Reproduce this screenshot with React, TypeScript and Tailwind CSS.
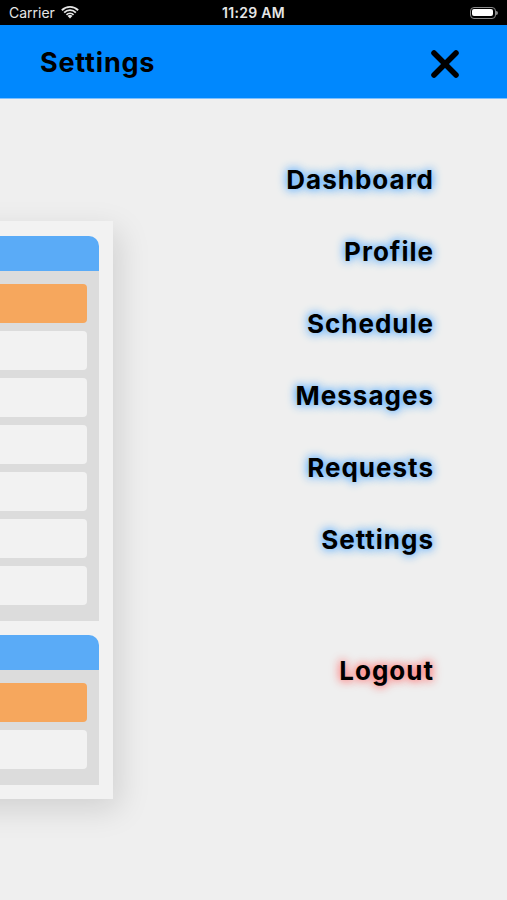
import { X } from "lucide-react";

const menu = ["Dashboard", "Profile", "Schedule", "Messages", "Requests", "Settings"];

function StatusBar() {
  return (
    <div className="h-[25px] bg-black text-[#e6e6e6] flex items-center justify-between px-[9px] text-[14px] font-['Inter',sans-serif]">
      <div className="flex items-center gap-[6px] w-[120px]">
        <span>Carrier</span>
        <svg width="18" height="13" viewBox="0 0 18 13" fill="#e6e6e6">
          <path d="M9 12.5 6.6 10a3.4 3.4 0 0 1 4.8 0z" />
          <path d="M4.8 8.2a6 6 0 0 1 8.4 0l-1.3 1.3a4.2 4.2 0 0 0-5.8 0z" />
          <path d="M2.5 5.9a9.3 9.3 0 0 1 13 0l-1.3 1.3a7.5 7.5 0 0 0-10.4 0z" />
          <path d="M.2 3.6a12.6 12.6 0 0 1 17.6 0l-1.3 1.3a10.8 10.8 0 0 0-15 0z" />
        </svg>
      </div>
      <span className="font-semibold tracking-[0.3px]">11:29 AM</span>
      <div className="w-[120px] flex justify-end">
        <div className="flex items-center">
          <div className="w-[26px] h-[12px] rounded-[4px] border border-[#8a8a8a] p-[1.5px]">
            <div className="w-full h-full bg-white rounded-[2px]" />
          </div>
          <div className="w-[2px] h-[4px] bg-[#8a8a8a] rounded-r-sm" />
        </div>
      </div>
    </div>
  );
}

function Section({ rows }: { rows: number }) {
  return (
    <div>
      <div className="h-[35px] bg-[#5aabf7] rounded-tr-[10px]" />
      <div className="bg-[#dcdcdc] pt-[13px] pb-[16px] pr-[12px] flex flex-col gap-[8px]">
        <div className="h-[39px] bg-[#f6a75d] rounded-r-[4px]" />
        {Array.from({ length: rows }).map((_, i) => (
          <div key={i} className="h-[39px] bg-[#f2f2f2] rounded-r-[4px]" />
        ))}
      </div>
    </div>
  );
}

export default function App() {
  return (
    <div className="w-[507px] h-[900px] overflow-hidden flex flex-col bg-[#efefef] font-['Inter',sans-serif]">
      <StatusBar />
      <div className="h-[74px] bg-[#0088fe] flex items-center justify-between pl-[40px] pr-[40px] pt-[4px] border-b border-[#7cc0ff]">
        <span className="text-[27px] font-bold text-black tracking-[0.8px]">Settings</span>
        <X size={44} strokeWidth={3} color="#000" />
      </div>
      <div className="flex-1 flex justify-between">
        <div className="mt-[122px] ml-[-200px] w-[313px] h-[578px] bg-[#f2f2f2] pt-[15px] pr-[14px] flex flex-col gap-[14px] shadow-[6px_10px_30px_rgba(0,0,0,0.13)]">
          <Section rows={6} />
          <Section rows={1} />
        </div>
        <div className="pr-[73px] pt-[44px] flex flex-col items-end">
          {menu.map((m) => (
            <div
              key={m}
              className="h-[72px] flex items-center text-[26px] font-bold text-black tracking-[1px] [text-shadow:0_0_8px_#3d9dff,0_0_12px_#8cc8ff]"
            >
              {m}
            </div>
          ))}
          <div className="mt-[59px] h-[72px] flex items-center text-[26px] font-bold text-black tracking-[1px] [text-shadow:0_0_8px_#ff6060,0_0_12px_#ffa0a0]">
            Logout
          </div>
        </div>
      </div>
    </div>
  );
}
